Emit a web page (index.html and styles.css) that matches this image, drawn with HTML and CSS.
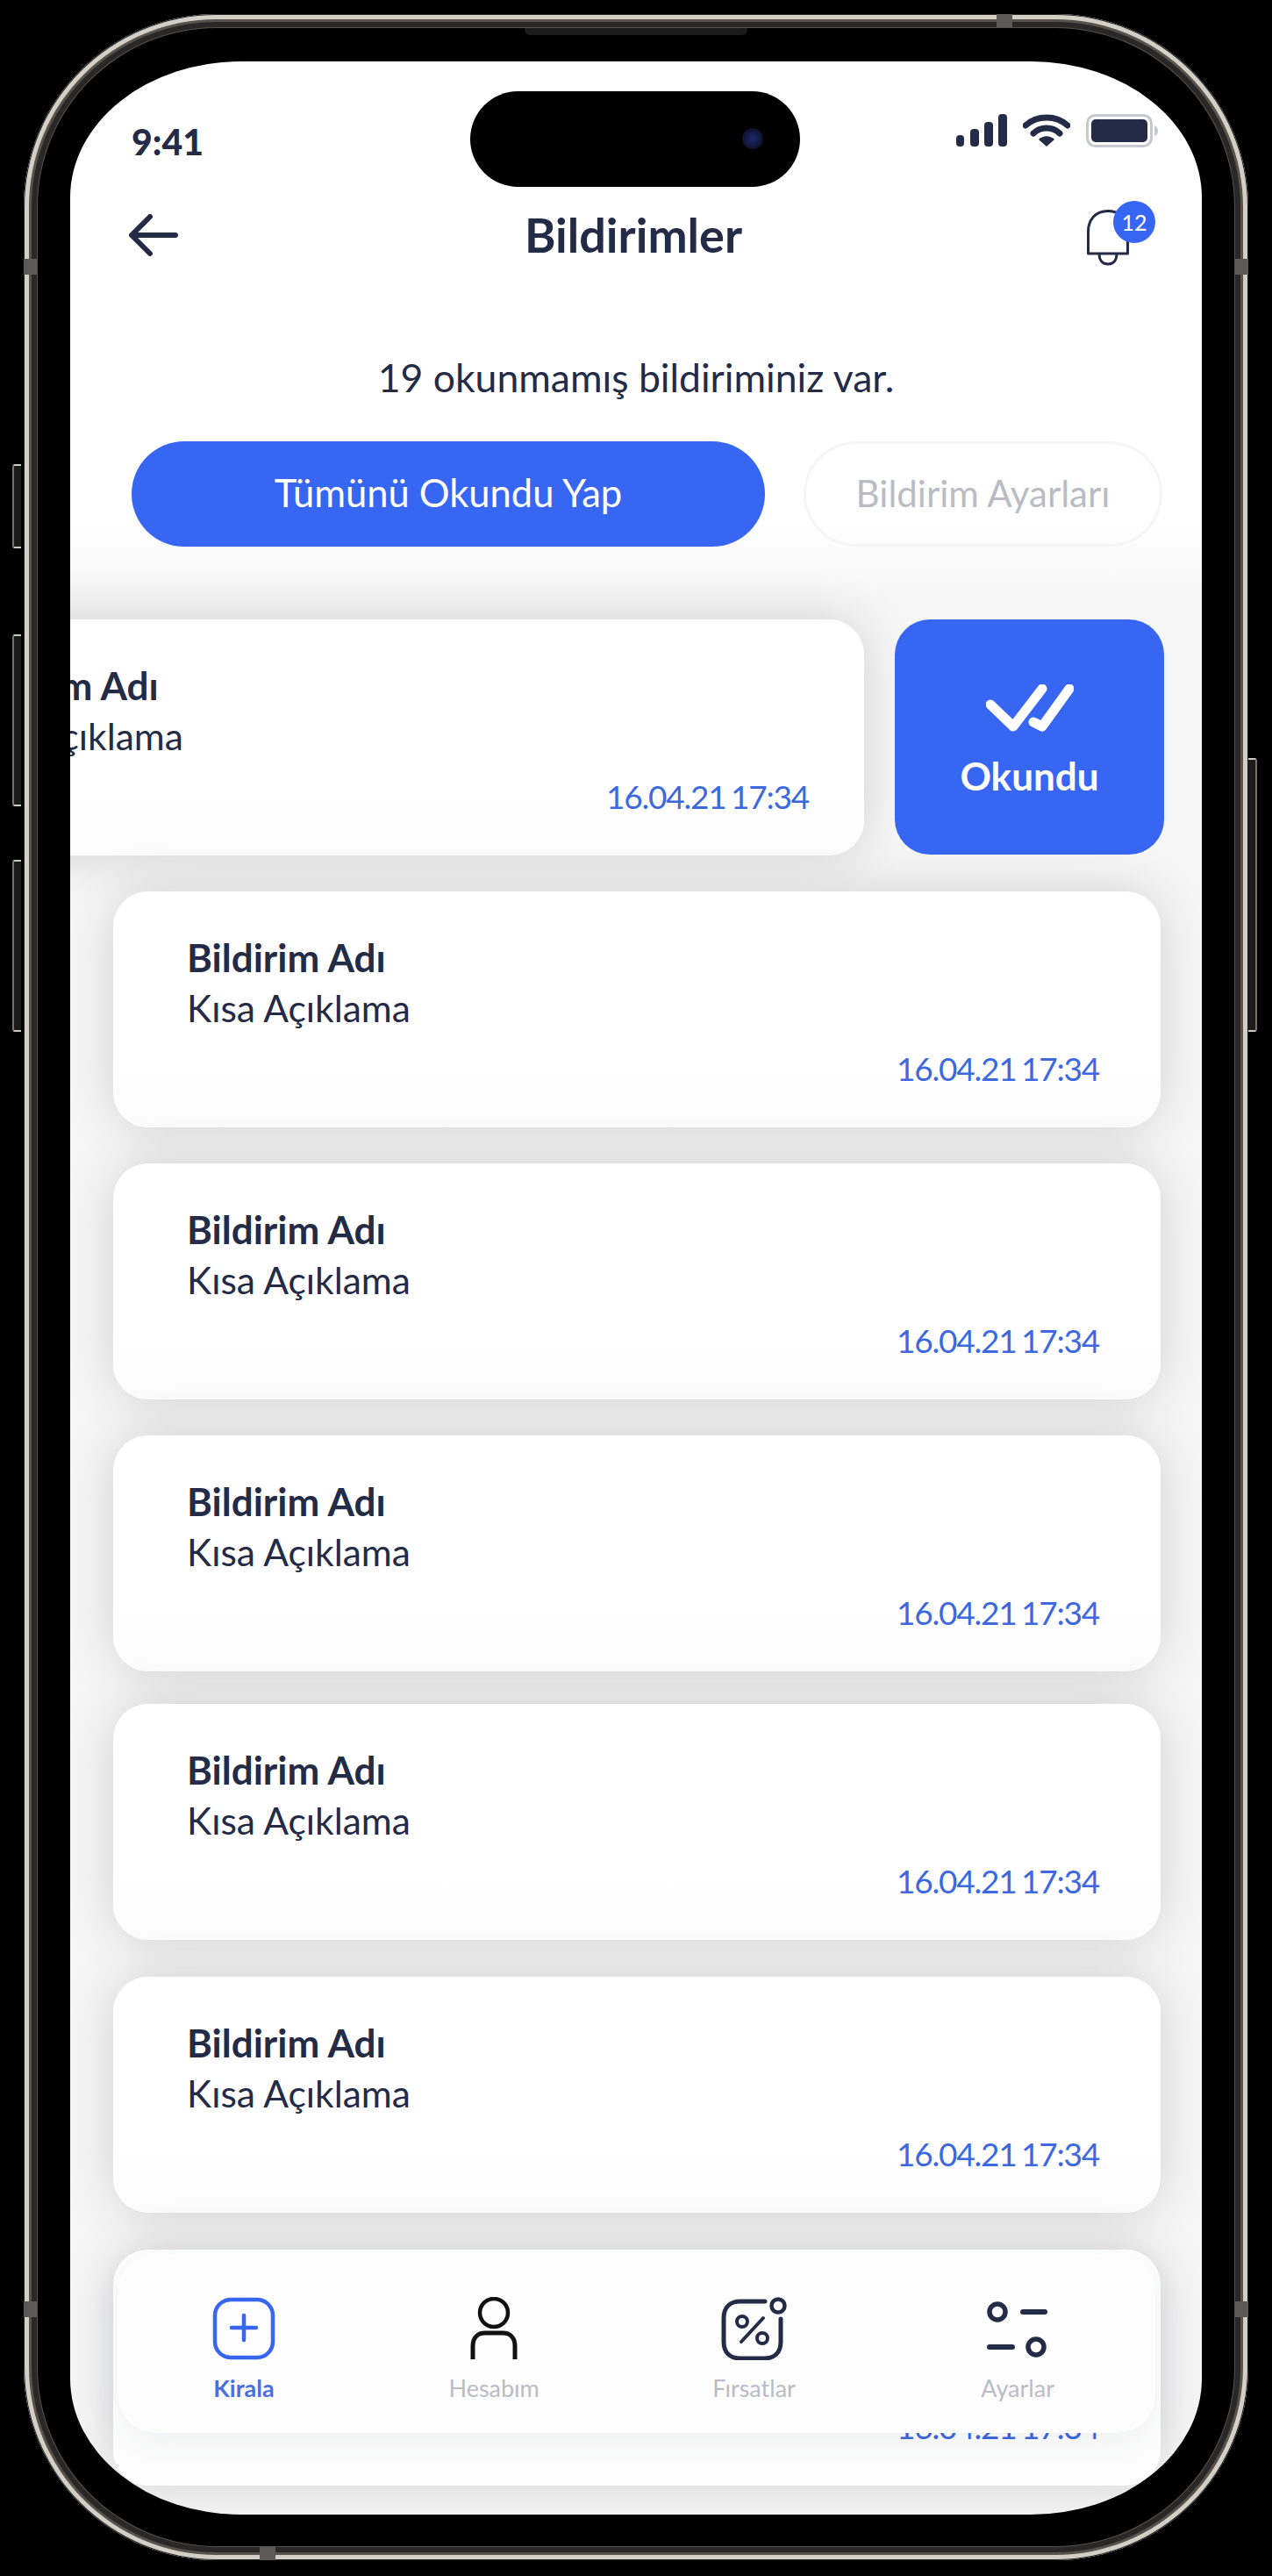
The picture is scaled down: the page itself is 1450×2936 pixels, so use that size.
FILE: index.html
```html
<!DOCTYPE html>
<html lang="tr">
<head>
  <meta charset="UTF-8">
  <title>Bildirimler</title>
  <link rel="stylesheet" href="styles.css">
</head>
<body>
  <div class="phone">
    <span class="side mute"></span>
    <span class="side vol-up"></span>
    <span class="side vol-down"></span>
    <span class="side power"></span>
    <span class="band band-lt"></span>
    <span class="band band-rt"></span>
    <span class="band band-lb"></span>
    <span class="band band-rb"></span>
    <span class="band band-top"></span>
    <span class="band band-bottom"></span>
    <span class="speaker"></span>

    <div class="screen">
      <div class="island"><span class="camera"></span></div>

      <div class="status">
        <span class="time">9:41</span>
        <div class="status-icons">
          <svg width="58" height="37" viewBox="0 0 58 37"><rect x="0" y="24" width="9" height="13" rx="4" fill="#232b47"/><rect x="16" y="17" width="10" height="20" rx="4" fill="#232b47"/><rect x="32" y="9" width="10" height="28" rx="4" fill="#232b47"/><rect x="48" y="0" width="10" height="37" rx="4" fill="#232b47"/></svg>
          <svg width="54" height="38" viewBox="0 0 54 38"><path d="M3 13C16 1 38 1 51 13M12 22C20 14 34 14 42 22" fill="none" stroke="#232b47" stroke-width="7" stroke-linecap="round"/><path d="M27 37L18 29C23 24 31 24 36 29Z" fill="#232b47"/></svg>
          <svg width="82" height="38" viewBox="0 0 82 38"><rect x="1.5" y="1.5" width="73" height="35" rx="9" fill="none" stroke="#c6c8ce" stroke-width="3"/><rect x="6" y="6" width="64" height="26" rx="5" fill="#232b47"/><path d="M78 13C81 14 82 16 82 19S81 24 78 25Z" fill="#c6c8ce"/></svg>
        </div>
      </div>

      <div class="header">
        <svg class="back" width="56" height="48" viewBox="0 0 56 48"><path d="M53 24H4M24 3L3 24L24 45" fill="none" stroke="#232b47" stroke-width="6" stroke-linecap="round" stroke-linejoin="round"/></svg>
        <h1>Bildirimler</h1>
        <div class="bell">
          <svg width="48" height="64" viewBox="0 0 48 64"><path d="M1.5 50V25C1.5 11 10 1.5 24 1.5S46.5 11 46.5 25V50ZM14 50C14 58 18 62 24 62S34 58 34 50" fill="none" stroke="#232b47" stroke-width="3" stroke-linejoin="round"/></svg>
          <span class="badge">12</span>
        </div>
      </div>

      <p class="unread">19 okunmamış bildiriminiz var.</p>

      <div class="actions">
        <button class="btn-primary">Tümünü Okundu Yap</button>
        <button class="btn-ghost">Bildirim Ayarları</button>
      </div>

      <div class="list">
        <div class="swiped">
          <div class="card">
            <div class="card-title">Bildirim Adı</div>
            <div class="card-text">Kısa Açıklama</div>
            <div class="card-date">16.04.21 17:34</div>
          </div>
          <div class="read-action">
            <svg width="100" height="54" viewBox="0 0 100 54"><path d="M5 23L31 48L64 5" fill="none" stroke="#fff" stroke-width="11" stroke-linecap="round" stroke-linejoin="round"/><path d="M54 43L64 48L95 5" fill="none" stroke="#fff" stroke-width="11" stroke-linecap="round" stroke-linejoin="round"/></svg>
            <span>Okundu</span>
          </div>
        </div>

        <div class="card">
          <div class="card-title">Bildirim Adı</div>
          <div class="card-text">Kısa Açıklama</div>
          <div class="card-date">16.04.21 17:34</div>
        </div>
        <div class="card">
          <div class="card-title">Bildirim Adı</div>
          <div class="card-text">Kısa Açıklama</div>
          <div class="card-date">16.04.21 17:34</div>
        </div>
        <div class="card">
          <div class="card-title">Bildirim Adı</div>
          <div class="card-text">Kısa Açıklama</div>
          <div class="card-date">16.04.21 17:34</div>
        </div>
        <div class="card">
          <div class="card-title">Bildirim Adı</div>
          <div class="card-text">Kısa Açıklama</div>
          <div class="card-date">16.04.21 17:34</div>
        </div>
        <div class="card">
          <div class="card-title">Bildirim Adı</div>
          <div class="card-text">Kısa Açıklama</div>
          <div class="card-date">16.04.21 17:34</div>
        </div>
        <div class="card">
          <div class="card-title">Bildirim Adı</div>
          <div class="card-text">Kısa Açıklama</div>
          <div class="card-date">16.04.21 17:34</div>
        </div>
      </div>

      <div class="tabbar">
        <div class="tab active">
          <svg width="72" height="72" viewBox="0 0 72 72"><rect x="3" y="3" width="66" height="66" rx="18" fill="none" stroke="#3766f3" stroke-width="4.5"/><path d="M36 21V49M22 35H50" fill="none" stroke="#3766f3" stroke-width="4.5" stroke-linecap="round"/></svg>
          <span>Kirala</span>
        </div>
        <div class="tab">
          <svg width="56" height="72" viewBox="0 0 56 72"><circle cx="28" cy="18" r="16" fill="none" stroke="#111" stroke-width="4.5"/><path d="M4 71V56C4 46 10 41 18 41H38C46 41 52 46 52 56V71" fill="none" stroke="#111" stroke-width="5"/></svg>
          <span>Hesabım</span>
        </div>
        <div class="tab">
          <svg width="76" height="72" viewBox="0 0 76 72"><path d="M50 5H22C10 5 3 12 3 24V51C3 63 10 70 22 70H49C61 70 68 63 68 51V25" fill="none" stroke="#232b47" stroke-width="5" stroke-linecap="round"/><circle cx="65" cy="10" r="7.5" fill="none" stroke="#232b47" stroke-width="4.5"/><path d="M23 51L48 24" fill="none" stroke="#232b47" stroke-width="4" stroke-linecap="round"/><circle cx="24" cy="28" r="6" fill="none" stroke="#232b47" stroke-width="4"/><circle cx="47" cy="47" r="6" fill="none" stroke="#232b47" stroke-width="4"/></svg>
          <span>Fırsatlar</span>
        </div>
        <div class="tab">
          <svg width="70" height="72" viewBox="0 0 70 72"><circle cx="12" cy="17" r="9" fill="none" stroke="#232b47" stroke-width="5.5"/><path d="M41 17H66M3 57H29" fill="none" stroke="#232b47" stroke-width="6" stroke-linecap="round"/><circle cx="56" cy="57" r="9" fill="none" stroke="#232b47" stroke-width="5.5"/></svg>
          <span>Ayarlar</span>
        </div>
      </div>
    </div>
  </div>
</body>
</html>
```

FILE: styles.css
```css
* {
  box-sizing: border-box;
}
html, body {
  margin: 0;
  background-color: #000;
}
body {
  padding: 16px 27px 18px;
  font-family: "Lato", "Noto Sans", sans-serif;
  color: #232b47;
}

/* device frame */
.phone {
  position: relative;
  width: 1396px;
  height: 2902px;
  padding: 54px 53px 52px;
  border-radius: 220px;
  background-color: #000;
  box-shadow:
    inset 0 0 0 1px #222,
    inset 0 0 0 6px #d3cfc7,
    inset 0 0 0 9px #57524c,
    inset 0 0 0 15px #2a2826,
    inset 0 0 0 16px #55524e;
}
.side {
  position: absolute;
  left: -13px;
  width: 10px;
  background-color: #1a1a19;
  border: 2px solid #76726b;
  border-top-color: #cfcac2;
  border-bottom-color: #cfcac2;
  border-right: none;
  border-radius: 3px 0 0 3px;
}
.mute { top: 513px; height: 96px; }
.vol-up { top: 707px; height: 196px; }
.vol-down { top: 964px; height: 196px; }
.power {
  left: auto;
  right: -10px;
  top: 848px;
  height: 312px;
  border: 2px solid #76726b;
  border-top-color: #cfcac2;
  border-bottom-color: #cfcac2;
  border-left: none;
  border-radius: 0 3px 3px 0;
}
.band {
  position: absolute;
  background-color: #5c5a56;
}
.band-lt, .band-rt, .band-lb, .band-rb {
  width: 15px;
  height: 18px;
}
.band-lt { left: 0; top: 279px; }
.band-rt { right: 0; top: 279px; }
.band-lb { left: 0; top: 2607px; }
.band-rb { right: 0; top: 2607px; }
.band-top, .band-bottom {
  width: 18px;
  height: 15px;
}
.band-top { left: 1109px; top: 0; }
.band-bottom { left: 269px; bottom: 0; }
.speaker {
  position: absolute;
  top: 16px;
  left: 571px;
  width: 254px;
  height: 8px;
  background-color: #1c1c1c;
  border-radius: 0 0 6px 6px;
}

.screen {
  position: relative;
  width: 1290px;
  height: 2796px;
  overflow: hidden;
  border-radius: 195px / 155px;
  background: linear-gradient(#fff 520px, #f6f6f7 610px);
}
.island {
  position: absolute;
  top: 34px;
  left: 456px;
  width: 376px;
  height: 109px;
  border-radius: 55px;
  background-color: #000;
}
.camera {
  position: absolute;
  top: 42px;
  left: 310px;
  width: 24px;
  height: 24px;
  border-radius: 50%;
  background: radial-gradient(circle, #1a2a6c 0, #141a44 45%, #07070f 100%);
}

/* status bar */
.status {
  display: flex;
  justify-content: space-between;
  height: 114px;
  padding: 60px 50px 0 70px;
}
.time {
  align-self: flex-end;
  font-size: 41px;
  font-weight: 900;
  line-height: 44px;
}
.status-icons {
  display: flex;
  gap: 18px;
  align-items: flex-start;
}

/* header */
.header {
  display: grid;
  grid-template-columns: 1fr auto 1fr;
  align-items: center;
  height: 80px;
  margin-top: 44px;
  padding: 0 66px 0 60px;
}
.back {
  margin-left: 7px;
}
h1 {
  margin: 0;
  font-size: 54px;
  font-weight: 700;
  line-height: 80px;
}
.bell {
  position: relative;
  justify-self: end;
  width: 48px;
  height: 64px;
  margin-right: 17px;
  margin-top: 6px;
}
.badge {
  position: absolute;
  top: -10px;
  left: 30px;
  width: 48px;
  height: 48px;
  border-radius: 50%;
  background-color: #3766f3;
  color: #fff;
  font-size: 25px;
  line-height: 48px;
  text-align: center;
}

.unread {
  margin: 92px 0 0;
  font-size: 44.5px;
  line-height: 60px;
  text-align: center;
}

.actions {
  display: flex;
  gap: 44px;
  margin-top: 43px;
  padding: 0 45px 0 70px;
}
.actions button {
  height: 120px;
  border-radius: 60px;
  font-family: inherit;
}
.btn-primary {
  width: 722px;
  padding-bottom: 6px;
  border: none;
  background-color: #3766f3;
  color: #fff;
  font-size: 43.5px;
}
.btn-ghost {
  width: 409px;
  padding-bottom: 3px;
  border: 3px solid #f6f6f6;
  background-color: transparent;
  color: #b9bcc4;
  font-size: 42px;
}

/* notifications */
.list {
  display: flex;
  flex-direction: column;
  gap: 41px;
  margin-top: 83px;
}
.list > :nth-child(5) {
  margin-top: -4px;
}
.list > :nth-child(6), .list > :nth-child(7) {
  margin-top: 1px;
}
.card {
  height: 269px;
  margin: 0 47px 0 49px;
  padding: 46px 70px 0 84px;
  border-radius: 40px;
  background: linear-gradient(#fff 70%, #fcfcfc);
  box-shadow: 0 0 60px rgba(0, 0, 0, 0.15);
}
.card-title {
  font-size: 44px;
  font-weight: 700;
  line-height: 58px;
}
.card-text {
  font-size: 42.5px;
  line-height: 58px;
}
.card-date {
  margin-top: 18px;
  color: #3c68e0;
  font-size: 37px;
  letter-spacing: -1.2px;
  word-spacing: -3px;
  line-height: 44px;
  text-align: right;
}
.swiped {
  display: flex;
  gap: 35px;
  height: 268px;
  margin-right: 43px;
  margin-bottom: 1px;
}
.swiped .card {
  flex: 1;
  margin: 0 0 0 -210px;
  padding-right: 63px;
}
.read-action {
  display: flex;
  flex-direction: column;
  align-items: center;
  width: 307px;
  padding-top: 74px;
  border-radius: 40px;
  background-color: #3766f3;
  color: #fff;
  font-size: 44px;
  font-weight: 700;
}
.read-action span {
  margin-top: 24px;
}

/* bottom tabs */
.tabbar {
  position: absolute;
  left: 54px;
  right: 53px;
  bottom: 93px;
  display: flex;
  justify-content: space-between;
  height: 204px;
  padding: 49px 115px 0 108px;
  border-radius: 44px;
  background-color: #fdfdfe;
  box-shadow: 0 10px 40px rgba(40, 50, 70, 0.08);
}
.tab {
  display: flex;
  flex-direction: column;
  align-items: center;
  color: #b9bcc4;
  font-size: 27px;
  line-height: 40px;
}
.tab:nth-child(3) {
  margin-right: 14px;
}
.tab span {
  margin-top: 12px;
}
.tab.active {
  color: #4a70e0;
  font-weight: 700;
}
```
